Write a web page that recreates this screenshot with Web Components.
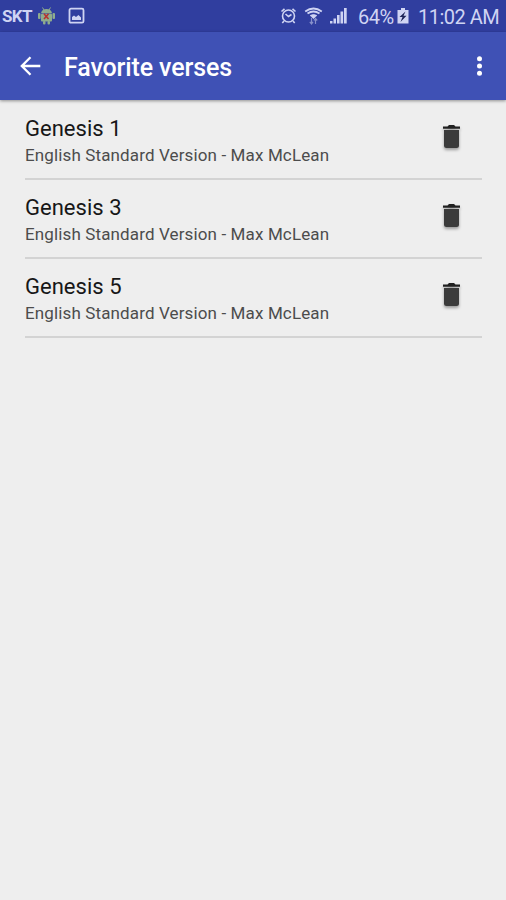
<!DOCTYPE html>
<html lang="en">
<head>
<meta charset="utf-8">
<title>Favorite verses</title>
<style>
html, body { margin: 0; height: 100%; background: #eeeeee; }
body { font-family: Roboto, "Liberation Sans", sans-serif; overflow: hidden; }
</style>
</head>
<body>
<verses-app></verses-app>

<template id="status-tpl">
<style>
:host { display: flex; align-items: center; height: 32px; box-sizing: border-box; background: #303e9f; color: #cfd4f3; padding: 0 7px 0 2px; }
svg { display: block; flex: none; }
.carrier { font-size: 17px; font-weight: 700; line-height: 32px; width: 30px; letter-spacing: -.6px; margin-right: 5px; white-space: nowrap; }
.t { font-size: 20px; line-height: 32px; white-space: nowrap; padding-top: 1px; box-sizing: border-box; height: 32px; }
.pct { width: 35px; margin-left: 11px; letter-spacing: -.5px; }
.time { width: 81px; margin-left: 9px; letter-spacing: -.5px; }
.gap { flex: 1; }
</style>
<span class="carrier">SKT</span>
<svg width="19" height="20" viewBox="0 0 19 20"><g fill="#8fac8d"><path d="M4 7Q5 3 9.500 3Q14 3 15 7Z"/><rect x="4" y="7.500" width="11" height="8" rx="1"/><rect x="1" y="7" width="2.500" height="6" rx="1"/><rect x="15.500" y="7" width="2.500" height="6" rx="1"/><rect x="6" y="15" width="2.500" height="3.500" rx="1"/><rect x="10.500" y="15" width="2.500" height="3.500" rx="1"/></g><path d="M5.500 1.500L7 4M13.500 1.500L12 4" stroke="#8fac8d"/><path d="M7 7.800L11.500 13M11.500 7.800L7 13" stroke="#b8322f" stroke-width="1.600"/></svg>
<svg width="17" height="18" viewBox="0 0 17 18" style="margin-left:12px"><rect x="1.500" y="1.700" width="14" height="14" rx="1.500" fill="none" stroke="#cfd4f3" stroke-width="1.800"/><path d="M4 13V10L6 8.500L8 10L10.500 8L13 10.500V13Z" fill="#cfd4f3"/></svg>
<span class="gap"></span>
<svg width="17" height="18" viewBox="0 0 17 18"><g fill="none" stroke="#cfd4f3" stroke-width="1.600"><circle cx="8.500" cy="9" r="6"/><path d="M1.500 4.500L4.500 1.800M12.500 1.800L15.500 4.500M4 14L2.300 16M13 14L14.700 16M5.500 7L8.500 9.500L11.500 7.500"/></g></svg>
<svg width="19" height="20" viewBox="0 0 19 20" style="margin-left:7px"><g fill="none" stroke="#cfd4f3"><path d="M1.200 5.500Q9.500 -.5 17.800 5.500M3.500 7.500Q9.500 3.500 15.500 7.500" stroke-width="1.800"/><path d="M6.200 9.500Q9.500 7.500 12.800 9.500L9.500 12.500Z" fill="#cfd4f3" stroke-width=".8"/></g><path d="M7.500 12V17.500M5.800 15.800L7.500 18L9 15.800M11.500 18V13M9.900 14.500L11.500 12.500L13.200 14.500" fill="none" stroke="#8790cb" stroke-width="1.200"/></svg>
<svg width="17" height="18" viewBox="0 0 17 18" style="margin-left:7px"><g fill="#cfd4f3"><rect x="0" y="14" width="2.500" height="2.500"/><rect x="3.500" y="11.500" width="2.500" height="5"/><rect x="7" y="8" width="2.600" height="8.500"/><rect x="10.500" y="4.500" width="2.600" height="12"/><rect x="14" y="1" width="2.700" height="15.500"/></g></svg>
<span class="t pct">64%</span>
<svg width="12" height="18" viewBox="0 0 12 18" style="margin-left:4px"><path d="M4 1H8V3H11.500V16.500H.5V3H4Z" fill="#cfd4f3"/><path d="M8.500 4.500L2.500 10H5.500L3.500 15L9.500 8.800H6.500Z" fill="#1d2457"/></svg>
<span class="t time">11:02 AM</span>
</template>

<template id="bar-tpl">
<style>
:host { display: flex; align-items: center; height: 68px; box-sizing: border-box; background: #3f51b5; color: #fff; padding: 0 15px 0 18px; box-shadow: 0 1px 3px rgba(0,0,0,.4); position: relative; }
h1 { flex: 1; margin: 3px 0 0 21px; font-size: 25px; line-height: 32px; font-weight: 500; letter-spacing: -.12px; white-space: nowrap; }
svg { display: block; }
</style>
<svg width="25" height="24" viewBox="0 0 25 24"><path d="M22.300 12H4M12.500 3.300L3.800 12L12.500 20.700" fill="none" stroke="#fff" stroke-width="2.300"/></svg>
<h1><slot></slot></h1>
<svg width="24" height="24" viewBox="0 0 24 24"><g fill="#fff"><circle cx="12.500" cy="4.800" r="2.500"/><circle cx="12.500" cy="12" r="2.500"/><circle cx="12.500" cy="19.200" r="2.500"/></g></svg>
</template>

<template id="row-tpl">
<style>
:host { display: flex; align-items: flex-start; justify-content: space-between; box-sizing: border-box; height: 79px; padding: 14px 21px 0 0; border-bottom: 2px solid #d3d3d3; }
.name { font-size: 22px; line-height: 28px; color: #171717; white-space: nowrap; letter-spacing: .02px; }
.sub { font-size: 17px; line-height: 24px; color: #4c4c4c; white-space: nowrap; letter-spacing: .13px; }
svg { display: block; margin-top: 9px; filter: drop-shadow(0 2px 1.500px rgba(0,0,0,.35)); }
</style>
<div><div class="name"><slot></slot></div><div class="sub"><slot name="version"></slot></div></div>
<svg width="19" height="26" viewBox="0 0 19 26"><path d="M1 2.500H5.500L7 1H12L13.500 2.500H18V4.700H1Z" fill="#202020"/><path d="M2 6H17V21.500Q17 24 14.500 24H4.500Q2 24 2 21.500Z" fill="#3b3b3b"/></svg>
</template>

<template id="app-tpl">
<style>
:host { display: flex; flex-direction: column; height: 100vh; background: #eee; }
main { padding: 1px 24px 0 25px; }
</style>
<status-bar></status-bar>
<app-bar>Favorite verses</app-bar>
<main>
<verse-row>Genesis 1<span slot="version">English Standard Version - Max McLean</span></verse-row>
<verse-row>Genesis 3<span slot="version">English Standard Version - Max McLean</span></verse-row>
<verse-row>Genesis 5<span slot="version">English Standard Version - Max McLean</span></verse-row>
</main>
</template>

<script>
function define(name, id) {
  customElements.define(name, class extends HTMLElement {
    constructor() {
      super();
      this.attachShadow({ mode: "open" }).append(document.getElementById(id).content.cloneNode(true));
    }
  });
}
define("status-bar", "status-tpl");
define("app-bar", "bar-tpl");
define("verse-row", "row-tpl");
define("verses-app", "app-tpl");
</script>
</body>
</html>
